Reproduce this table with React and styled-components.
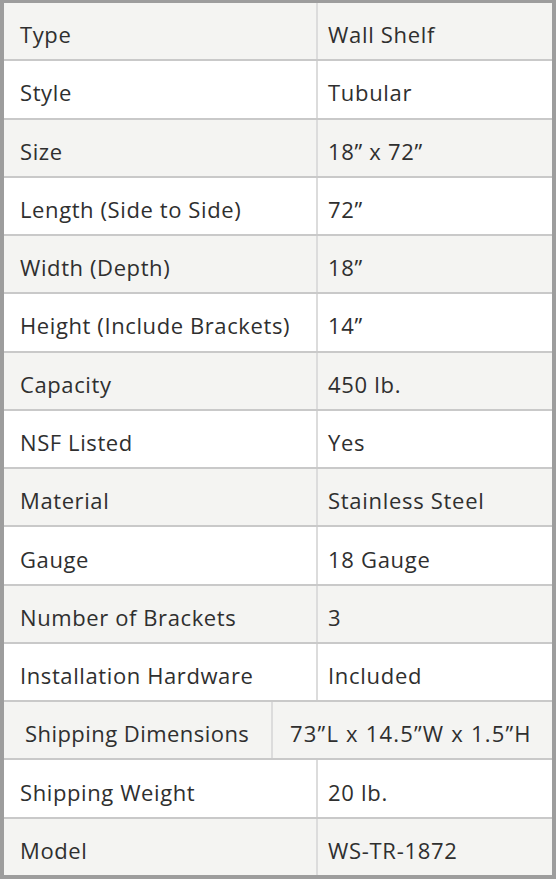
import styled, { createGlobalStyle } from "styled-components";

const GlobalStyle = createGlobalStyle`
    html, body {
        margin: 0;
        padding: 0;
        background: #ffffff;
    }
`;

const specs = [
    { label: "Type", value: "Wall Shelf" },
    { label: "Style", value: "Tubular" },
    { label: "Size", value: "18\u201d x 72\u201d" },
    { label: "Length (Side to Side)", value: "72\u201d" },
    { label: "Width (Depth)", value: "18\u201d" },
    { label: "Height (Include Brackets)", value: "14\u201d" },
    { label: "Capacity", value: "450 lb." },
    { label: "NSF Listed", value: "Yes" },
    { label: "Material", value: "Stainless Steel" },
    { label: "Gauge", value: "18 Gauge" },
    { label: "Number of Brackets", value: "3" },
    { label: "Installation Hardware", value: "Included" },
    { label: "Shipping Dimensions", value: "73\u201dL x 14.5\u201dW x 1.5\u201dH", wide: true },
    { label: "Shipping Weight", value: "20 lb." },
    { label: "Model", value: "WS-TR-1872" },
];

const App = () => {
    return (
        <>
            <GlobalStyle />
            <Table>
                {specs.map((spec, i) => (
                    <Row key={spec.label} $shaded={i % 2 === 0} $wide={spec.wide}>
                        <Label $wide={spec.wide}>{spec.label}</Label>
                        <Value $wide={spec.wide}>{spec.value}</Value>
                    </Row>
                ))}
            </Table>
        </>
    );
};
export default App;

const Table = styled.div`
    box-sizing: border-box;
    width: 556px;
    height: 879px;
    display: flex;
    flex-direction: column;
    gap: 2px;
    background: #c9c9c9;
    border-style: solid;
    border-color: #9d9d9d;
    border-width: 3px 4px 4px 4px;
    font-family: "Open Sans", "Liberation Sans", sans-serif;
    font-size: 22px;
    color: #2f2f2f;
`;
const Row = styled.div`
    flex: 1;
    display: grid;
    grid-template-columns: ${(p) => (p.$wide ? "267px" : "312px")} 1fr;
    column-gap: 2px;
    background: #dcdcdc;
    & > div {
        background: ${(p) => (p.$shaded ? "#f4f4f2" : "#ffffff")};
    }
`;
const Label = styled.div`
    display: flex;
    align-items: center;
    padding-top: 6px;
    padding-left: ${(p) => (p.$wide ? "21px" : "16px")};
    letter-spacing: ${(p) => (p.$wide ? "0.45px" : "0.6px")};
`;
const Value = styled.div`
    display: flex;
    align-items: center;
    padding-top: 6px;
    padding-left: ${(p) => (p.$wide ? "17px" : "10px")};
    letter-spacing: ${(p) => (p.$wide ? "1.2px" : "0.7px")};
`;
